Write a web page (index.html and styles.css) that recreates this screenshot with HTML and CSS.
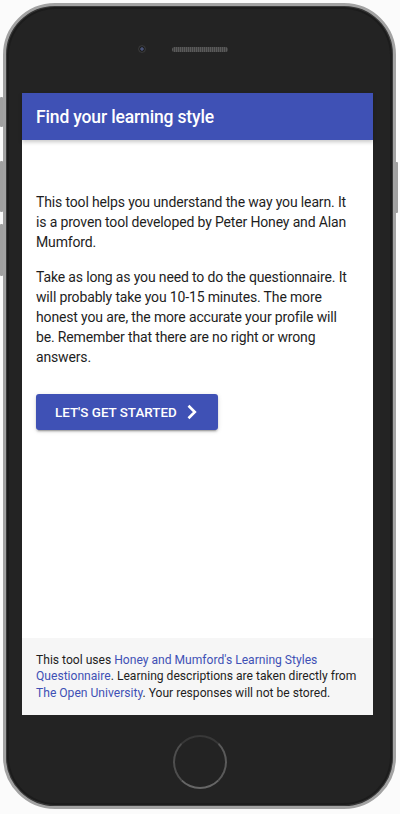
FILE: index.html
```html
<!DOCTYPE html>
<html lang="en">
<head>
<meta charset="utf-8">
<title>Find your learning style</title>
<link rel="stylesheet" href="styles.css">
</head>
<body>
<div class="device">
  <span class="side-btn mute"></span>
  <span class="side-btn vol-up"></span>
  <span class="side-btn vol-down"></span>
  <span class="side-btn power"></span>
  <div class="top-bezel">
    <span class="camera"></span>
    <span class="speaker"></span>
    <span></span>
  </div>
  <div class="screen">
    <header class="app-bar">
      <h1 class="app-title">Find your learning style</h1>
    </header>
    <main class="content">
      <p>This tool helps you understand the way you learn. It is a proven tool developed by Peter Honey and Alan Mumford.</p>
      <p>Take as long as you need to do the questionnaire. It will probably take you 10-15 minutes. The more honest you are, the more accurate your profile will be. Remember that there are no right or wrong answers.</p>
      <button class="start-btn" type="button">
        <span>Let's get started</span>
        <svg class="chev" width="12" height="16" viewBox="0 0 12 16"><polyline points="2.5,1.8 8.8,8 2.5,14.2" fill="none" stroke="#fff" stroke-width="2.6"/></svg>
      </button>
    </main>
    <footer class="footer">
      This tool uses <a href="#">Honey and Mumford's Learning Styles Questionnaire</a>. Learning descriptions are taken directly from <a href="#">The Open University</a>. Your responses will not be stored.
    </footer>
  </div>
  <div class="bottom-bezel">
    <span class="home"></span>
  </div>
</div>
</body>
</html>
```
FILE: styles.css
```css
html, body {
  margin: 0;
  padding: 0;
  background: #fbfbfb;
}
body {
  font-family: Roboto, "Noto Sans", "Liberation Sans", sans-serif;
}
.device {
  position: relative;
  box-sizing: border-box;
  width: 393px;
  height: 806px;
  margin: 3px 0 0 3px;
  border: 3px solid #a2a2a2;
  border-radius: 52px;
  background: #232323;
  box-shadow: inset 0 0 0 1px #3a3a3a, inset 0 0 0 3px #1c1c1c;
  display: flex;
  flex-direction: column;
}
.side-btn {
  position: absolute;
  width: 3px;
  background: #a0a0a0;
  border-radius: 1px;
}
.mute { left: -6px; top: 91px; height: 30px; }
.vol-up { left: -6px; top: 155px; height: 51px; }
.vol-down { left: -6px; top: 218px; height: 52px; }
.power { right: -5px; top: 156px; height: 51px; }
.top-bezel {
  height: 87px;
  box-sizing: border-box;
  padding-top: 39px;
  display: grid;
  grid-template-columns: 1fr auto 1fr;
  align-items: start;
}
.camera {
  justify-self: end;
  width: 8px;
  height: 8px;
  margin-right: 26px;
  border-radius: 50%;
  background: radial-gradient(circle, #4a5478 0 1.3px, #151515 2.2px, #3c3c3c 3.2px, #2a2a2a 4px);
}
.speaker {
  width: 56px;
  height: 5px;
  margin-top: 1.5px;
  border-radius: 3px;
  background: repeating-linear-gradient(90deg, #5a5a5a 0 1px, #404040 1px 2px);
}
.screen {
  width: 351px;
  height: 622px;
  margin-left: 16px;
  background: #fff;
  display: flex;
  flex-direction: column;
}
.app-bar {
  height: 47px;
  background: #3f51b5;
  display: flex;
  align-items: center;
  padding: 0 14px;
  box-shadow: 0 2px 4px rgba(0, 0, 0, 0.22);
  position: relative;
}
.app-title {
  margin: 0;
  color: #fff;
  font-size: 17.5px;
  font-weight: 500;
  letter-spacing: -0.15px;
}
.content {
  flex: 1;
  padding: 52px 18px 0 14px;
  color: #1e1e1e;
}
.content p {
  margin: 0 0 15px;
  font-size: 14px;
  line-height: 20px;
  letter-spacing: -0.15px;
}
.start-btn {
  margin-top: 27px;
  height: 36px;
  display: flex;
  align-items: center;
  padding: 0 20px 0 19px;
  border: 0;
  border-radius: 3px;
  background: #3f51b5;
  color: #fff;
  font-family: inherit;
  font-size: 13.4px;
  font-weight: 500;
  text-transform: uppercase;
  letter-spacing: 0;
  box-shadow: 0 2px 2px 0 rgba(0,0,0,.14), 0 3px 1px -2px rgba(0,0,0,.2), 0 1px 5px 0 rgba(0,0,0,.12);
}
.chev {
  margin-left: 9px;
}
.footer {
  background: #f6f6f6;
  padding: 14px 14px 14px;
  font-size: 12.1px;
  line-height: 16.3px;
  color: #1e1e1e;
}
.footer a {
  color: #3f51b5;
  text-decoration: none;
}
.bottom-bezel {
  flex: 1;
  display: flex;
  justify-content: center;
}
.home {
  box-sizing: border-box;
  width: 54px;
  height: 54px;
  margin-top: 20px;
  border-radius: 50%;
  border: 2px solid #383838;
  border-bottom-color: #666;
  border-left-color: #4e4e4e;
  border-right-color: #5a5a5a;
}
```
